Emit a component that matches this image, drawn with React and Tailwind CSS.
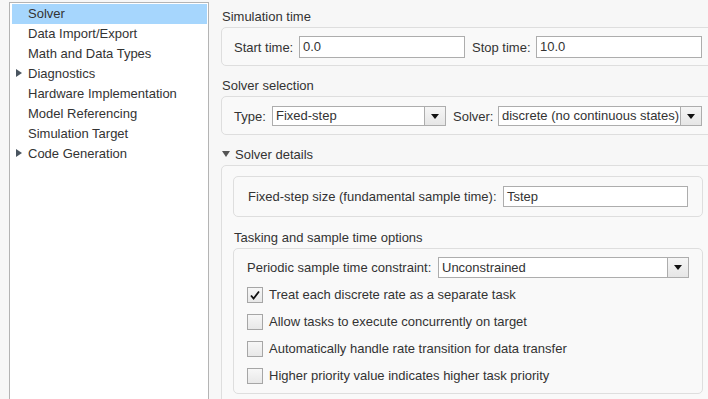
import React from "react";

const font = { fontFamily: '"Liberation Sans", Arial, sans-serif' };

function TriRight() {
  return (
    <svg width="6" height="8" viewBox="0 0 6 8" className="shrink-0">
      <path d="M0 0 L6 4 L0 8 Z" fill="#4a5560" />
    </svg>
  );
}

function TriDown() {
  return (
    <svg width="8" height="6" viewBox="0 0 8 6" className="shrink-0">
      <path d="M0 0 L8 0 L4 6 Z" fill="#555" />
    </svg>
  );
}

function DropBtn() {
  return (
    <div className="w-[21px] h-full border-l border-[#adadad] bg-gradient-to-b from-[#f6f6f6] to-[#e6e6e6] flex items-center justify-center shrink-0">
      <svg width="8" height="5" viewBox="0 0 8 5">
        <path d="M0 0 L8 0 L4 5 Z" fill="#111" />
      </svg>
    </div>
  );
}

function Select({ value, w, h = "h-[20px]" }) {
  return (
    <div className={`${w} ${h} border border-[#adadad] bg-white flex items-stretch shrink-0`}>
      <div className="flex-1 pl-[3px] flex items-center text-[13px] text-[#333] whitespace-nowrap overflow-hidden">{value}</div>
      <DropBtn />
    </div>
  );
}

function Input({ value, w, h = "h-[22px]" }) {
  return (
    <div className={`${w} ${h} border border-[#adadad] bg-white pl-[3px] flex items-center text-[13px] text-[#333] shrink-0`}>
      {value}
    </div>
  );
}

function Checkbox({ checked }) {
  return (
    <div className="w-[16px] h-[16px] border border-[#a6a6a6] bg-gradient-to-b from-[#f7f7f7] to-[#e8e8e8] flex items-center justify-center shrink-0">
      {checked && (
        <svg width="12" height="12" viewBox="0 0 12 12">
          <path d="M2 6.5 L4.6 9.5 L10 2.5" stroke="#111" strokeWidth="1.8" fill="none" />
        </svg>
      )}
    </div>
  );
}

const treeItems = [
  { label: "Solver", selected: true },
  { label: "Data Import/Export" },
  { label: "Math and Data Types" },
  { label: "Diagnostics", arrow: true },
  { label: "Hardware Implementation" },
  { label: "Model Referencing" },
  { label: "Simulation Target" },
  { label: "Code Generation", arrow: true },
];

const checks = [
  { label: "Treat each discrete rate as a separate task", checked: true },
  { label: "Allow tasks to execute concurrently on target" },
  { label: "Automatically handle rate transition for data transfer" },
  { label: "Higher priority value indicates higher task priority" },
];

export default function App() {
  return (
    <div className="w-[708px] h-[399px] overflow-hidden bg-[#f7f7f7] flex items-start text-[13px] text-[#333]" style={font}>
      {/* Left tree */}
      <div className="pl-[9px] pt-[2px] shrink-0">
        <div className="w-[200px] h-[420px] border border-[#b4b4b4] bg-white p-[1px] pl-[2px] pr-[1px]">
          {treeItems.map((it) => (
            <div
              key={it.label}
              className={`h-[20px] flex items-center pl-[4px] pb-[2px] gap-[6px] ${it.selected ? "bg-[#a6d6fd]" : ""}`}
            >
              <div className="w-[6px] flex items-center">{it.arrow && <TriRight />}</div>
              <span className="whitespace-nowrap leading-[15px]">{it.label}</span>
            </div>
          ))}
        </div>
      </div>

      {/* Right side */}
      <div className="ml-[12px] w-[500px] shrink-0 flex flex-col">
        <div className="shrink-0 h-[27px] pt-[9px] pl-[1px] leading-[15px]">Simulation time</div>
        <div className="shrink-0 h-[39px] border border-[#dedede] rounded-[5px] bg-[#f9f9f9] flex items-center pl-[12px] pt-[1px]">
          <span className="w-[65px] leading-[15px]">Start time:</span>
          <Input value="0.0" w="w-[166px]" />
          <span className="ml-[7px] w-[64px] leading-[15px]">Stop time:</span>
          <Input value="10.0" w="w-[166px]" />
        </div>

        <div className="shrink-0 h-[30px] pt-[12px] pl-[1px] leading-[15px]">Solver selection</div>
        <div className="shrink-0 h-[39px] border border-[#dedede] rounded-[5px] bg-[#f9f9f9] flex items-center pl-[12px] pt-[1px]">
          <span className="w-[38px] leading-[15px]">Type:</span>
          <Select value="Fixed-step" w="w-[174px]" />
          <span className="ml-[7px] w-[45px] leading-[15px]">Solver:</span>
          <Select value="discrete (no continuous states)" w="w-[204px]" />
        </div>

        <div className="shrink-0 h-[30px] pt-[8px] pl-[1px] leading-[15px] flex items-center gap-[5px]">
          <TriDown />
          <span>Solver details</span>
        </div>
        <div className="shrink-0 h-[300px] border border-[#dedede] rounded-[5px] bg-[#f9f9f9] pl-[11px] pt-[10px]">
          <div className="w-[470px] h-[41px] border border-[#dedede] rounded-[5px] bg-[#f9f9f9] flex items-center pl-[14px]">
            <span className="w-[255px] whitespace-nowrap leading-[15px]">Fixed-step size (fundamental sample time):</span>
            <Input value="Tstep" w="w-[185px]" h="h-[21px]" />
          </div>
          <div className="h-[31px] pt-[13px] pl-[1px] leading-[15px]">Tasking and sample time options</div>
          <div className="w-[470px] h-[146px] border border-[#dedede] rounded-[5px] bg-[#f9f9f9] pl-[13px] pt-[8px]">
            <div className="flex items-center h-[21px]">
              <span className="w-[191px] whitespace-nowrap leading-[15px]">Periodic sample time constraint:</span>
              <Select value="Unconstrained" w="w-[251px]" h="h-[21px]" />
            </div>
            <div className="mt-[3px]">
              {checks.map((c) => (
                <div key={c.label} className="h-[27px] flex items-center gap-[6px]">
                  <Checkbox checked={c.checked} />
                  <span className="whitespace-nowrap leading-[15px]">{c.label}</span>
                </div>
              ))}
            </div>
          </div>
        </div>
      </div>
    </div>
  );
}
